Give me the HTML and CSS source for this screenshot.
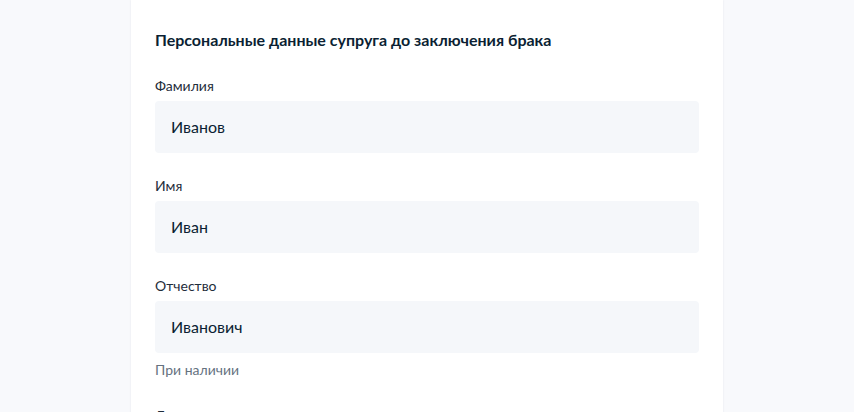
FILE: index.html
```html
<!DOCTYPE html>
<html lang="ru">
<head>
<meta charset="utf-8">
<title>Персональные данные</title>
<link rel="stylesheet" href="styles.css">
</head>
<body>
<div class="page">
  <section class="card">
    <h2 class="title">Персональные данные супруга до заключения брака</h2>
    <div class="field">
      <label class="label">Фамилия</label>
      <div class="input">Иванов</div>
    </div>
    <div class="field">
      <label class="label">Имя</label>
      <div class="input">Иван</div>
    </div>
    <div class="field">
      <label class="label">Отчество</label>
      <div class="input">Иванович</div>
      <div class="hint">При наличии</div>
    </div>
    <div class="field">
      <label class="label">Дата рождения</label>
      <div class="input"></div>
    </div>
  </section>
</div>
</body>
</html>
```

FILE: styles.css
```css
html, body {
  margin: 0;
  padding: 0;
  background: #f8f9fc;
  height: 100%;
  overflow: hidden;
}
body {
  font-family: Lato, "Noto Sans", sans-serif;
  color: #0b1f33;
}
.page {
  display: flex;
  justify-content: center;
}
.card {
  width: 592px;
  box-sizing: border-box;
  background: #ffffff;
  padding: 28px 24px 40px;
  box-shadow: 0 0 2px rgba(11, 31, 51, 0.08);
}
.title {
  margin: 0 0 24px;
  font-size: 16px;
  line-height: 24px;
  font-weight: 700;
}
.field {
  display: flex;
  flex-direction: column;
  margin-bottom: 23px;
}
.label {
  font-size: 14px;
  line-height: 20px;
  margin-bottom: 5px;
  color: #1f2d3b;
}
.input {
  height: 52px;
  box-sizing: border-box;
  background: #f5f7fa;
  border-radius: 4px;
  padding: 0 16px;
  font-size: 16px;
  line-height: 52px;
  color: #0b1f33;
}
.hint {
  margin-top: 7px;
  margin-bottom: 3px;
  font-size: 14px;
  line-height: 20px;
  color: #66727f;
}
```
